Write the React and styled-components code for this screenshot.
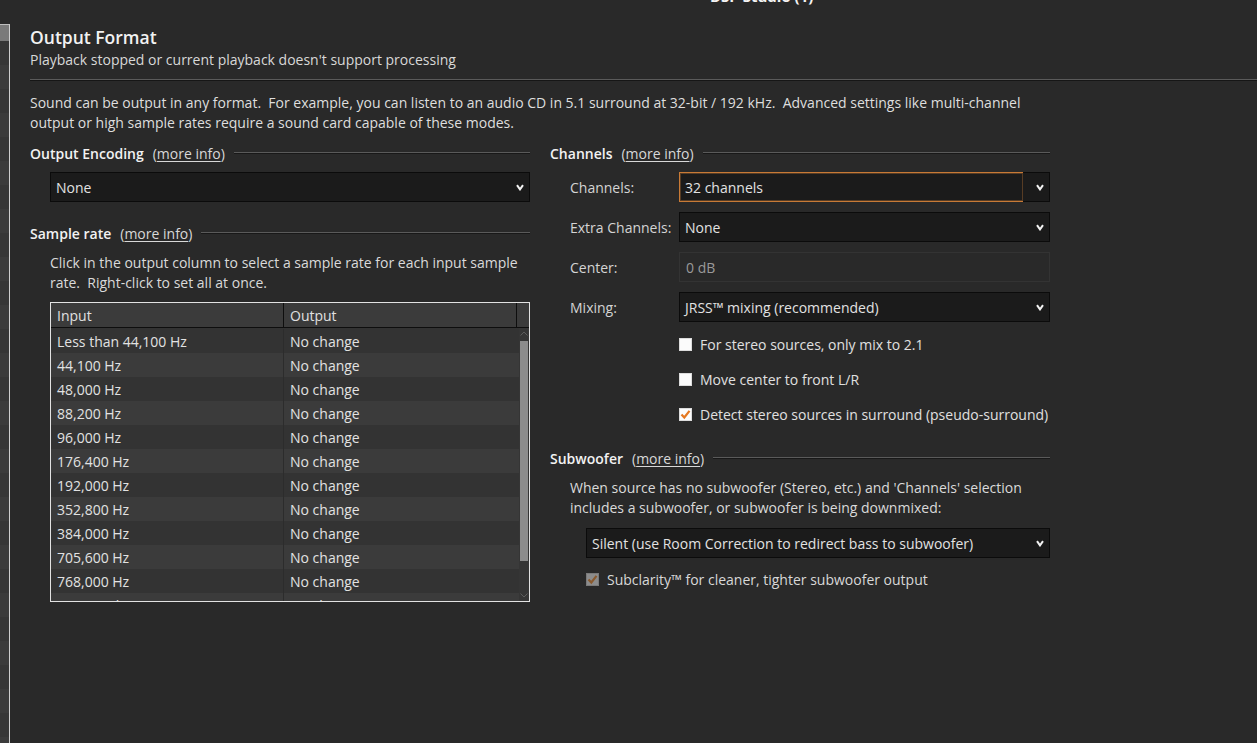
import React from "react";
import styled, { createGlobalStyle } from "styled-components";

const GlobalStyle = createGlobalStyle`
  html, body {
    margin: 0;
    padding: 0;
    background: #292929;
    height: 100%;
    overflow: hidden;
  }
  body {
    font-family: "Open Sans", "Noto Sans", sans-serif;
    font-size: 14px;
    color: #dedede;
  }
`;

const Page = styled.div`
  width: 1257px;
  height: 743px;
  display: flex;
  flex-direction: column;
  overflow: hidden;
  background: #292929;
`;

const TitleBar = styled.div`
  height: 24px;
  flex: none;
  padding-left: 710px;
  overflow: hidden;
`;

const WindowTitle = styled.div`
  margin-top: -13px;
  font-size: 15px;
  font-weight: 700;
  color: #f4f4f4;
  line-height: 18px;
`;

const Body = styled.div`
  flex: 1;
  display: flex;
  min-height: 0;
`;

const Sidebar = styled.div`
  width: 9px;
  flex: none;
  border-top: 1px solid #bdbdbd;
  border-right: 1px solid #cfcfcf;
  display: flex;
  flex-direction: column;
  overflow: hidden;
`;

const SideRow = styled.div`
  flex: none;
  height: ${(p) => (p.$first ? "16px" : "24px")};
  background: ${(p) => (p.$first ? "#7a7a7a" : p.$alt ? "#3b3b3b" : "#363636")};
`;

const Main = styled.div`
  flex: 1;
  padding: 2px 0 0 20px;
  min-width: 0;
`;

const Title = styled.div`
  font-size: 17.5px;
  font-weight: 600;
  line-height: 22px;
  color: #f2f2f2;
`;

const Subtitle = styled.div`
  margin-top: 2px;
  line-height: 20px;
  color: #d8d8d8;
`;

const Rule = styled.div`
  margin-top: 9px;
  height: 1px;
  background: #5a5a5a;
  border-bottom: 1px solid #161616;
`;

const Intro = styled.p`
  margin: 12px 0 0;
  width: 1020px;
  line-height: 20px;
`;

const Columns = styled.div`
  margin-top: 10px;
  display: grid;
  grid-template-columns: 500px 500px;
  column-gap: 20px;
  align-items: start;
`;

const Column = styled.div`
  display: flex;
  flex-direction: column;
`;

const Heading = styled.div`
  display: flex;
  align-items: center;
  height: 20px;
  margin-top: ${(p) => p.$mt || 0}px;
  &::after {
    content: "";
    flex: 1;
    height: 1px;
    background: #5a5a5a;
    border-bottom: 1px solid #181818;
    margin-left: 9px;
  }
`;

const HeadingText = styled.span`
  font-weight: 600;
  color: #f2f2f2;
`;

const MoreInfo = styled.a`
  margin-left: 9px;
  color: #d8d8d8;
  text-decoration: none;
  white-space: nowrap;
  span {
    text-decoration: underline;
    text-underline-offset: 2px;
  }
`;

const Indented = styled.div`
  margin-top: ${(p) => p.$mt || 0}px;
  padding-left: ${(p) => p.$indent || 20}px;
`;

const Para = styled.div`
  line-height: 20px;
  color: #dadada;
`;

const SelectBox = styled.div`
  display: flex;
  height: 30px;
  background: #1b1b1b;
  color: #e2e2e2;
`;

const SelectValue = styled.div`
  flex: 1;
  display: flex;
  align-items: center;
  padding-left: 5px;
  white-space: nowrap;
  border: 1px solid ${(p) => (p.$focus ? "#c87a36" : "#0b0b0b")};
  border-right: none;
  box-shadow: ${(p) => (p.$focus ? "inset 0 0 0 1px rgba(200,122,54,0.35)" : "none")};
`;

const SelectArrow = styled.div`
  width: 21px;
  display: flex;
  align-items: center;
  justify-content: flex-end;
  padding-right: 5px;
  border: 1px solid #0b0b0b;
  border-left: none;
`;

const Chevron = () => (
  <svg width="8" height="7" viewBox="0 0 8 7">
    <polyline points="1,1.2 4,5.4 7,1.2" fill="none" stroke="#f2f2f2" strokeWidth="2" />
  </svg>
);

function Select({ value, focus }) {
  return (
    <SelectBox>
      <SelectValue $focus={focus}>{value}</SelectValue>
      <SelectArrow>
        <Chevron />
      </SelectArrow>
    </SelectBox>
  );
}

const TextField = styled.div`
  height: 30px;
  display: flex;
  align-items: center;
  padding-left: 6px;
  border: 1px solid #333333;
  background: #292929;
  color: #9a9a9a;
  box-sizing: border-box;
`;

const FieldRow = styled.div`
  display: flex;
  align-items: center;
  margin-top: ${(p) => p.$mt || 10}px;
  padding-left: 20px;
`;

const FieldLabel = styled.div`
  width: 109px;
  flex: none;
  color: #d4d4d4;
`;

const FieldControl = styled.div`
  flex: 1;
`;

const CheckRow = styled.label`
  display: flex;
  align-items: center;
  height: 20px;
  margin-top: ${(p) => p.$mt || 15}px;
  padding-left: ${(p) => p.$indent || 129}px;
  color: ${(p) => (p.$disabled ? "#d8d8d8" : "#e0e0e0")};
`;

const Box = styled.span`
  width: 13px;
  height: 13px;
  flex: none;
  box-sizing: border-box;
  margin-right: 8px;
  background: ${(p) => (p.$disabled ? "#8c8c8c" : "#fbfbfb")};
  border: 1px solid ${(p) => (p.$disabled ? "#7a7a7a" : "#dcdcdc")};
  display: flex;
  align-items: center;
  justify-content: center;
`;

function Checkbox({ checked, disabled, children, ...rest }) {
  return (
    <CheckRow $disabled={disabled} {...rest}>
      <Box $disabled={disabled}>
        {checked && (
          <svg width="11" height="11" viewBox="0 0 11 11">
            <polyline
              points="1.5,5.5 4.3,8.5 9.5,1.8"
              fill="none"
              stroke={disabled ? "#8a5a2e" : "#e4771f"}
              strokeWidth="2.2"
            />
          </svg>
        )}
      </Box>
      {children}
    </CheckRow>
  );
}

const Table = styled.div`
  margin-top: 9px;
  margin-left: 20px;
  height: 300px;
  border: 1px solid #e2e2e2;
  box-sizing: border-box;
  display: flex;
  flex-direction: column;
  overflow: hidden;
  background: #333333;
`;

const HeaderRow = styled.div`
  display: grid;
  grid-template-columns: 233px 233px 1fr;
  height: 24px;
  flex: none;
  background: #3b3b3b;
  border-bottom: 1px solid #0e0e0e;
`;

const HeaderCell = styled.div`
  padding-left: 6px;
  display: flex;
  align-items: center;
  color: #e0e0e0;
  border-right: ${(p) => (p.$last ? "none" : "1px solid #0e0e0e")};
`;

const TableBody = styled.div`
  flex: 1;
  display: flex;
  min-height: 0;
`;

const Rows = styled.div`
  flex: 1;
  overflow: hidden;
  padding-top: 1px;
`;

const Row = styled.div`
  display: grid;
  grid-template-columns: 233px 1fr;
  height: 24px;
  background: ${(p) => (p.$alt ? "#3b3b3b" : "#333333")};
`;

const Cell = styled.div`
  display: flex;
  align-items: center;
  padding-left: 6px;
  color: #e2e2e2;
  white-space: nowrap;
  border-right: ${(p) => (p.$first ? "1px solid #2c2c2c" : "none")};
`;

const ScrollTrack = styled.div`
  width: 10px;
  flex: none;
  background: #353535;
  display: flex;
  flex-direction: column;
  align-items: center;
`;

const ScrollThumb = styled.div`
  width: 8px;
  height: 220px;
  margin-top: 2px;
  background: #8c8c8c;
`;

const ScrollArrow = styled.div`
  height: ${(p) => p.$h || 10}px;
  display: flex;
  align-items: ${(p) => (p.$down ? "flex-end" : "center")};
  margin-top: ${(p) => (p.$down ? "auto" : "0")};
  padding-bottom: ${(p) => (p.$down ? "3px" : "0")};
`;

const rates = [
  "Less than 44,100 Hz",
  "44,100 Hz",
  "48,000 Hz",
  "88,200 Hz",
  "96,000 Hz",
  "176,400 Hz",
  "192,000 Hz",
  "352,800 Hz",
  "384,000 Hz",
  "705,600 Hz",
  "768,000 Hz",
  "Greater than 768,000 Hz",
];

function SectionHeading({ children, mt }) {
  return (
    <Heading $mt={mt}>
      <HeadingText>{children}</HeadingText>
      <MoreInfo>
        (<span>more info</span>)
      </MoreInfo>
    </Heading>
  );
}

export default function App() {
  return (
    <Page>
      <GlobalStyle />
      <TitleBar>
        <WindowTitle>DSP Studio (1)</WindowTitle>
      </TitleBar>
      <Body>
        <Sidebar>
          <SideRow $first />
          {Array.from({ length: 30 }).map((_, i) => (
            <SideRow key={i} $alt={i % 2 === 1} />
          ))}
        </Sidebar>
        <Main>
          <Title>Output Format</Title>
          <Subtitle>Playback stopped or current playback doesn't support processing</Subtitle>
          <Rule />
          <Intro>
            Sound can be output in any format.&nbsp; For example, you can listen to an audio CD in 5.1
            surround at 32-bit / 192 kHz.&nbsp; Advanced settings like multi-channel output or high sample
            rates require a sound card capable of these modes.
          </Intro>
          <Columns>
            <Column>
              <SectionHeading>Output Encoding</SectionHeading>
              <Indented $mt={9}>
                <Select value="None" />
              </Indented>
              <SectionHeading mt={21}>Sample rate</SectionHeading>
              <Indented $mt={10}>
                <Para>
                  Click in the output column to select a sample rate for each input sample rate.&nbsp;
                  Right-click to set all at once.
                </Para>
              </Indented>
              <Table>
                <HeaderRow>
                  <HeaderCell>Input</HeaderCell>
                  <HeaderCell>Output</HeaderCell>
                  <HeaderCell $last />
                </HeaderRow>
                <TableBody>
                  <Rows>
                    {rates.map((r, i) => (
                      <Row key={r} $alt={i % 2 === 1}>
                        <Cell $first>{r}</Cell>
                        <Cell>No change</Cell>
                      </Row>
                    ))}
                  </Rows>
                  <ScrollTrack>
                    <ScrollArrow $h={11}>
                      <svg width="8" height="5" viewBox="0 0 8 5">
                        <polyline points="0.5,4.5 4,1 7.5,4.5" fill="none" stroke="#5c5c5c" strokeWidth="1" />
                      </svg>
                    </ScrollArrow>
                    <ScrollThumb />
                    <ScrollArrow $down $h={12}>
                      <svg width="8" height="5" viewBox="0 0 8 5">
                        <polyline points="0.5,0.5 4,4 7.5,0.5" fill="none" stroke="#5c5c5c" strokeWidth="1" />
                      </svg>
                    </ScrollArrow>
                  </ScrollTrack>
                </TableBody>
              </Table>
            </Column>

            <Column>
              <SectionHeading>Channels</SectionHeading>
              <FieldRow $mt={9}>
                <FieldLabel>Channels:</FieldLabel>
                <FieldControl>
                  <Select value="32 channels" focus />
                </FieldControl>
              </FieldRow>
              <FieldRow>
                <FieldLabel>Extra Channels:</FieldLabel>
                <FieldControl>
                  <Select value="None" />
                </FieldControl>
              </FieldRow>
              <FieldRow>
                <FieldLabel>Center:</FieldLabel>
                <FieldControl>
                  <TextField>0 dB</TextField>
                </FieldControl>
              </FieldRow>
              <FieldRow>
                <FieldLabel>Mixing:</FieldLabel>
                <FieldControl>
                  <Select value="JRSS™ mixing (recommended)" />
                </FieldControl>
              </FieldRow>
              <Checkbox $mt={12}>For stereo sources, only mix to 2.1</Checkbox>
              <Checkbox>Move center to front L/R</Checkbox>
              <Checkbox checked>Detect stereo sources in surround (pseudo-surround)</Checkbox>

              <SectionHeading mt={24}>Subwoofer</SectionHeading>
              <Indented $mt={10}>
                <Para>
                  When source has no subwoofer (Stereo, etc.) and 'Channels' selection includes a subwoofer,
                  or subwoofer is being downmixed:
                </Para>
              </Indented>
              <Indented $mt={10} $indent={36}>
                <Select value="Silent (use Room Correction to redirect bass to subwoofer)" />
              </Indented>
              <Checkbox checked disabled $mt={11} $indent={36}>
                Subclarity™ for cleaner, tighter subwoofer output
              </Checkbox>
            </Column>
          </Columns>
        </Main>
      </Body>
    </Page>
  );
}
